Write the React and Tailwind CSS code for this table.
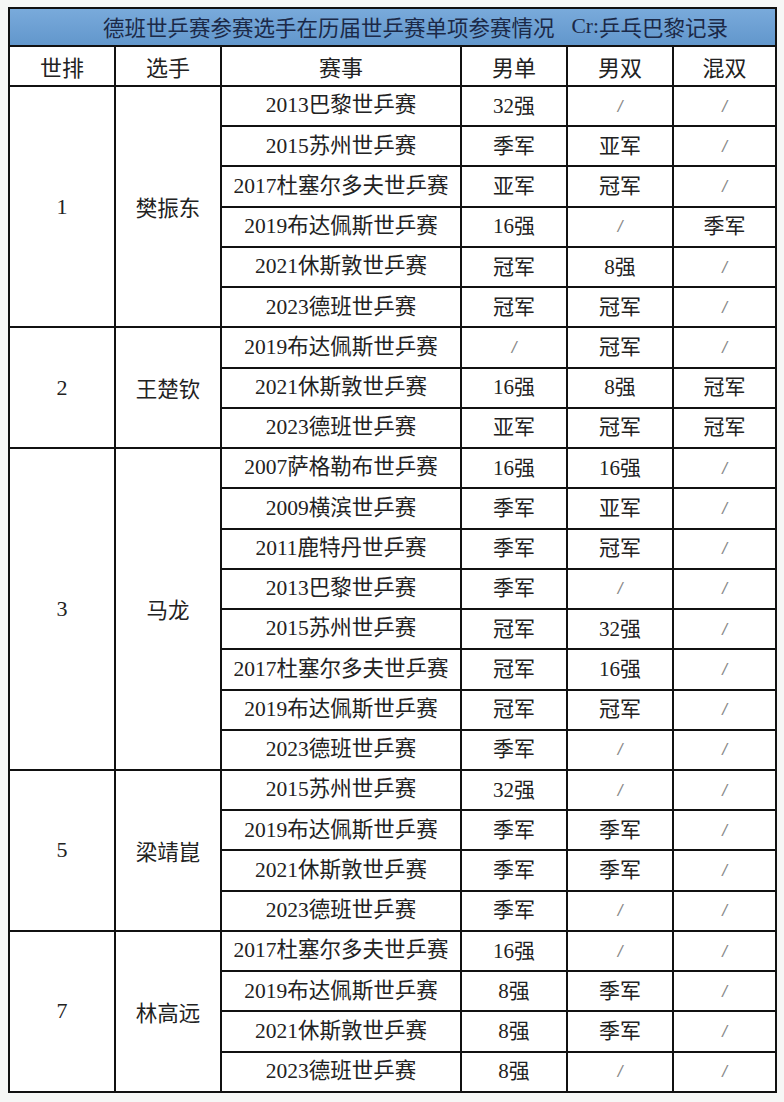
const groups = [
  {
    rank: "1",
    name: "樊振东",
    rows: [
      ["2013巴黎世乒赛", "32强", "/", "/"],
      ["2015苏州世乒赛", "季军", "亚军", "/"],
      ["2017杜塞尔多夫世乒赛", "亚军", "冠军", "/"],
      ["2019布达佩斯世乒赛", "16强", "/", "季军"],
      ["2021休斯敦世乒赛", "冠军", "8强", "/"],
      ["2023德班世乒赛", "冠军", "冠军", "/"],
    ],
  },
  {
    rank: "2",
    name: "王楚钦",
    rows: [
      ["2019布达佩斯世乒赛", "/", "冠军", "/"],
      ["2021休斯敦世乒赛", "16强", "8强", "冠军"],
      ["2023德班世乒赛", "亚军", "冠军", "冠军"],
    ],
  },
  {
    rank: "3",
    name: "马龙",
    rows: [
      ["2007萨格勒布世乒赛", "16强", "16强", "/"],
      ["2009横滨世乒赛", "季军", "亚军", "/"],
      ["2011鹿特丹世乒赛", "季军", "冠军", "/"],
      ["2013巴黎世乒赛", "季军", "/", "/"],
      ["2015苏州世乒赛", "冠军", "32强", "/"],
      ["2017杜塞尔多夫世乒赛", "冠军", "16强", "/"],
      ["2019布达佩斯世乒赛", "冠军", "冠军", "/"],
      ["2023德班世乒赛", "季军", "/", "/"],
    ],
  },
  {
    rank: "5",
    name: "梁靖崑",
    rows: [
      ["2015苏州世乒赛", "32强", "/", "/"],
      ["2019布达佩斯世乒赛", "季军", "季军", "/"],
      ["2021休斯敦世乒赛", "季军", "季军", "/"],
      ["2023德班世乒赛", "季军", "/", "/"],
    ],
  },
  {
    rank: "7",
    name: "林高远",
    rows: [
      ["2017杜塞尔多夫世乒赛", "16强", "/", "/"],
      ["2019布达佩斯世乒赛", "8强", "季军", "/"],
      ["2021休斯敦世乒赛", "8强", "季军", "/"],
      ["2023德班世乒赛", "8强", "/", "/"],
    ],
  },
];

const serif = "font-['Liberation_Serif','Noto_Sans_CJK_SC',serif]";
const sans = "font-['Noto_Sans_CJK_SC','Noto_Sans',sans-serif]";

function Result({ v }) {
  if (v === "/") {
    return <span className="font-['Liberation_Sans',sans-serif] text-[17px] font-light text-[#888] italic">/</span>;
  }
  return <span>{v}</span>;
}

export default function App() {
  return (
    <div className="min-h-screen bg-[#f6f7f6] pt-[7px] pl-[8px]">
      <div className="grid w-[769px] grid-cols-[104px_104px_238px_104px_104px_101px] gap-[2px] border-2 border-[#111] bg-[#111] text-[#222] leading-none">
        <div className={`col-span-6 flex h-[36px] items-center justify-center bg-gradient-to-b from-[#79aadb] to-[#6297cc] pl-[46px] ${sans} text-[21.5px] text-[#1b2947]`}>
          德班世乒赛参赛选手在历届世乒赛单项参赛情况
          <span className={`${serif} ml-[17px]`}>Cr:</span>乒乓巴黎记录
        </div>
        {["世排", "选手", "赛事", "男单", "男双", "混双"].map((h) => (
          <div key={h} className={`flex h-[38px] items-center justify-center bg-white ${sans} text-[22px]`}>
            {h}
          </div>
        ))}
        {groups.map((g) => (
          <Group key={g.name} g={g} />
        ))}
      </div>
    </div>
  );
}

function Group({ g }) {
  const n = g.rows.length;
  const span = {
    3: "row-span-3",
    4: "row-span-4",
    6: "row-span-6",
    8: "row-span-8",
  }[n];
  return (
    <>
      <div className={`${span} col-start-1 flex items-center justify-center bg-white ${serif} text-[22px]`}>
        {g.rank}
      </div>
      <div className={`${span} col-start-2 flex items-center justify-center bg-white ${sans} text-[21.5px]`}>
        {g.name}
      </div>
      {g.rows.map((r, i) => (
        <Row key={i} r={r} />
      ))}
    </>
  );
}

function Row({ r }) {
  return (
    <>
      <div className={`col-start-3 flex h-[38.24px] items-center justify-center bg-white ${serif} text-[21.5px]`}>
        {r[0]}
      </div>
      {r.slice(1).map((v, j) => (
        <div key={j} className={`flex h-[38.24px] items-center justify-center bg-white ${serif} text-[21px]`}>
          <Result v={v} />
        </div>
      ))}
    </>
  );
}
